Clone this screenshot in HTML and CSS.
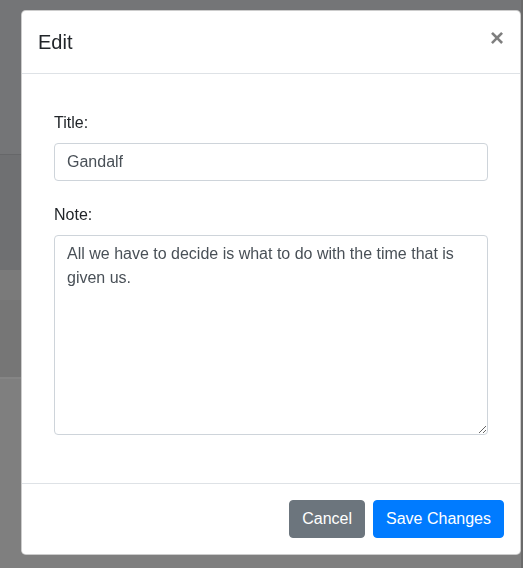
FILE: index.html
```html
<!DOCTYPE html>
<html lang="en">
<head>
<meta charset="utf-8">
<title>Edit</title>
<link rel="stylesheet" href="styles.css">
</head>
<body>
<div class="page">
  <div class="band band-top"></div>
  <div class="band-line dark"></div>
  <div class="band band-mid"></div>
  <div class="band band-light"></div>
  <div class="band band-row"></div>
  <div class="band-line light"></div>
  <div class="band band-bottom"></div>
</div>
<div class="modal">
  <div class="modal-header">
    <h5 class="modal-title">Edit</h5>
    <button type="button" class="close" aria-label="Close">×</button>
  </div>
  <div class="modal-body">
    <div class="form-group">
      <label class="form-label">Title:</label>
      <input class="form-control" type="text" value="Gandalf">
    </div>
    <div class="form-group">
      <label class="form-label">Note:</label>
      <textarea class="form-control textarea">All we have to decide is what to do with the time that is given us.</textarea>
    </div>
  </div>
  <div class="modal-footer">
    <button type="button" class="btn btn-secondary">Cancel</button>
    <button type="button" class="btn btn-primary">Save Changes</button>
  </div>
</div>
</body>
</html>
```

FILE: styles.css
```css
* { box-sizing: border-box; }
html, body { margin: 0; padding: 0; }
body {
  font-family: "Liberation Sans", Arial, sans-serif;
  font-size: 16px;
  line-height: 1.5;
  color: #212529;
  background: #7f7f7f;
  width: 523px;
  height: 568px;
  overflow: hidden;
}
.page {
  display: flex;
  flex-direction: column;
  height: 568px;
  border-right: 2px solid #6a6a6a;
}
.band-top { height: 154px; background: #747577; }
.band-line { height: 1px; }
.band-line.dark { background: #666769; }
.band-line.light { background: #858585; height: 2px; }
.band-mid { height: 115px; background: #6f7072; }
.band-light { height: 30px; background: #7a7a7a; }
.band-row { height: 77px; background: #767676; }
.band-bottom { flex: 1; background: #7f7f7f; }

.modal {
  position: fixed;
  top: 10px;
  left: 21px;
  width: 500px;
  background: #fff;
  border: 1px solid rgba(0,0,0,.2);
  border-radius: 4.8px;
  display: flex;
  flex-direction: column;
}
.modal-header {
  display: flex;
  align-items: flex-start;
  justify-content: space-between;
  padding: 16px;
  border-bottom: 1px solid #dee2e6;
}
.modal-title {
  margin: 0;
  font-size: 20px;
  font-weight: 400;
  line-height: 1.5;
  color: #212529;
}
.close {
  padding: 16px;
  margin: -17px -16px -16px auto;
  background: transparent;
  border: 0;
  font-family: "Liberation Sans", Arial, sans-serif;
  font-size: 24px;
  font-weight: 700;
  line-height: 1;
  color: #000;
  opacity: .5;
  text-shadow: 0 1px 0 #fff;
  cursor: pointer;
}
.modal-body {
  padding: 37px 32px 32px 32px;
}
.form-group { margin-bottom: 22px; }
.form-group:last-child { margin-bottom: 16px; }
.form-label {
  display: block;
  margin-bottom: 8px;
}
.form-control {
  display: block;
  width: 100%;
  height: 38px;
  padding: 6px 12px;
  font-family: "Liberation Sans", Arial, sans-serif;
  font-size: 16px;
  line-height: 1.5;
  color: #495057;
  background: #fff;
  border: 1px solid #ced4da;
  border-radius: 4px;
  margin: 0;
}
.textarea {
  height: 200px;
  resize: vertical;
  overflow: auto;
}
.modal-footer {
  display: flex;
  justify-content: flex-end;
  align-items: center;
  padding: 12px;
  border-top: 1px solid #dee2e6;
}
.btn {
  margin: 4px;
  padding: 6px 12px;
  font-family: "Liberation Sans", Arial, sans-serif;
  font-size: 16px;
  line-height: 1.5;
  border: 1px solid transparent;
  border-radius: 4px;
  color: #fff;
  cursor: pointer;
}
.btn-secondary { background: #6c757d; border-color: #6c757d; }
.btn-primary { background: #007bff; border-color: #007bff; }
```
